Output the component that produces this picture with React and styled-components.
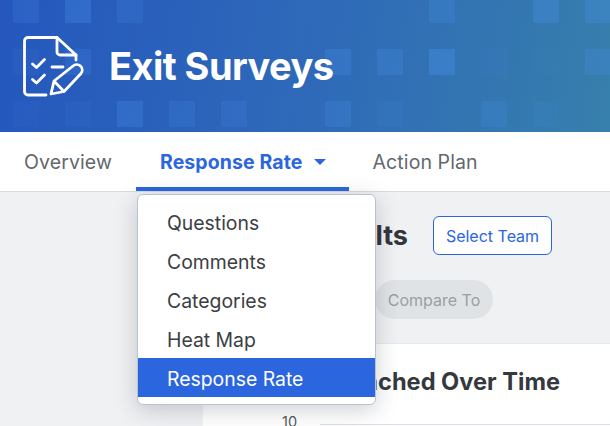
import styled, { createGlobalStyle } from "styled-components";

const GlobalStyle = createGlobalStyle`
  html, body {
    margin: 0;
    height: 100%;
    overflow: hidden;
    background: #f0f1f3;
    font-family: "Inter", "Liberation Sans", sans-serif;
  }
`;

const Page = styled.div`
  position: relative;
  width: 610px;
  height: 426px;
  overflow: hidden;
  color: #33363b;
`;

const Banner = styled.header`
  position: relative;
  display: flex;
  align-items: center;
  gap: 27px;
  height: 132px;
  padding-left: 22px;
  box-sizing: border-box;
  overflow: hidden;
  background: linear-gradient(100deg, #2557bd 0%, #2e69b9 50%, #377fac 100%);
`;

const SquareGrid = styled.div`
  position: absolute;
  left: 13px;
  top: -3px;
  display: grid;
  grid-template-columns: repeat(12, 26px);
  grid-auto-rows: 26px;
  gap: 26px;
`;

const Square = styled.span`
  background: rgba(72, 145, 235, ${(p) => p.$alpha});
`;

const BannerTitle = styled.h1`
  position: relative;
  margin: 0;
  font-size: 38px;
  font-weight: 700;
  letter-spacing: -0.55px;
  color: #fff;
`;

const LogoIcon = styled.svg`
  position: relative;
  width: 62px;
  height: 62px;
  margin-right: -2px;
  flex: none;
`;

const TabBar = styled.nav`
  display: flex;
  height: 60px;
  box-sizing: border-box;
  padding-left: 24px;
  background: #fff;
  border-bottom: 1px solid #d8dbe0;
`;

const Tab = styled.div`
  display: flex;
  align-items: center;
  gap: 11px;
  height: 59px;
  box-sizing: border-box;
  padding: ${(p) => (p.$active ? "4px 23px 0 24px" : "4px 0 0")};
  margin-right: 24px;
  font-size: 19.5px;
  letter-spacing: 0.1px;
  font-weight: ${(p) => (p.$active ? 700 : 400)};
  color: ${(p) => (p.$active ? "#2b66de" : "#62676e")};
  border-bottom: 4px solid ${(p) => (p.$active ? "#2b66de" : "transparent")};
`;

const Caret = styled.span`
  width: 0;
  height: 0;
  border-left: 6.5px solid transparent;
  border-right: 6.5px solid transparent;
  border-top: 6.5px solid #2b66de;
`;

const Main = styled.main`
  padding: 24px 0 0 203px;
`;

const TitleRow = styled.div`
  display: flex;
  align-items: center;
  gap: 25px;
  height: 39px;
`;

const PageTitle = styled.h2`
  width: 205px;
  margin: 0;
  font-size: 27px;
  font-weight: 700;
  text-align: right;
  white-space: nowrap;
`;

const SelectButton = styled.button`
  width: 119px;
  height: 39px;
  padding: 0;
  background: #fff;
  border: 1px solid #2b66de;
  border-radius: 6px;
  color: #2b66de;
  font: 400 16px "Inter", sans-serif;
`;

const FilterRow = styled.div`
  display: flex;
  justify-content: flex-end;
  width: 290px;
  margin-top: 25px;
`;

const Pill = styled.div`
  display: flex;
  align-items: center;
  justify-content: center;
  width: 118px;
  height: 39px;
  border-radius: 20px;
  background: #e0e3e6;
  color: #9a9ea3;
  font-size: 16px;
`;

const Card = styled.section`
  margin-top: 24px;
  height: 100px;
  background: #fff;
  border-top: 1px solid #e6e8eb;
`;

const CardTitle = styled.h3`
  width: 357px;
  margin: 0;
  padding-top: 24px;
  font-size: 23.6px;
  line-height: 27px;
  font-weight: 700;
  text-align: right;
  white-space: nowrap;
  color: #35383d;
`;

const AxisRow = styled.div`
  display: flex;
  align-items: center;
  gap: 23px;
  margin: 18px 0 0 79px;
  font-size: 14.5px;
  line-height: 18px;
  color: #55595f;
`;

const GridLine = styled.span`
  flex: 1;
  height: 1px;
  margin-top: 4px;
  background: #dcdee2;
`;

const Menu = styled.ul`
  position: absolute;
  left: 137px;
  top: 194px;
  width: 239px;
  height: 211px;
  box-sizing: border-box;
  margin: 0;
  padding: 7px 0 0;
  list-style: none;
  background: #fff;
  border: 1px solid #b9c3d2;
  border-radius: 6px;
  box-shadow: 0 5px 22px rgba(30, 40, 60, 0.22);
`;

const MenuItem = styled.li`
  display: flex;
  align-items: center;
  height: 39px;
  box-sizing: border-box;
  padding: 2px 0 0 29px;
  font-size: 19.4px;
  color: ${(p) => (p.$active ? "#fff" : "#3b3e43")};
  background: ${(p) => (p.$active ? "#2b66de" : "transparent")};
`;

const squares = [
  [0.18, 0.3, 0.18, 0, 0, 0, 0, 0, 0.24, 0, 0.3, 0.3],
  [0.1, 0.2, 0, 0, 0, 0, 0.25, 0.25, 0.38, 0.07, 0.03, 0.25],
  [0.07, 0.07, 0.28, 0.18, 0.18, 0, 0.22, 0.1, 0, 0.2, 0.1, 0],
];

const menuItems = ["Questions", "Comments", "Categories", "Heat Map", "Response Rate"];

export default function App() {
  return (
    <Page>
      <GlobalStyle />
      <Banner>
        <SquareGrid>
          {squares.flat().map((alpha, i) => (
            <Square key={i} $alpha={alpha} />
          ))}
        </SquareGrid>
        <LogoIcon viewBox="22 30 62 62" fill="none" stroke="#fff" strokeWidth="2.8" strokeLinecap="round" strokeLinejoin="round">
          <path d="M46 90H28a3.5 3.5 0 0 1-3.5-3.5V36a3.5 3.5 0 0 1 3.5-3.5h29L76 50v5" />
          <path d="M57 32.5V47a3 3 0 0 0 3 3h16" />
          <path d="M32.5 59l4 3.5 8-8M32.5 74.5l4 3.5 8-8M52 62h11" />
          <path d="M51 89l3-13L73 61a5.5 5.5 0 0 1 8 7.5L64 86.5zM54 76L64 86.5" />
        </LogoIcon>
        <BannerTitle>Exit Surveys</BannerTitle>
      </Banner>
      <TabBar>
        <Tab>Overview</Tab>
        <Tab $active>
          Response Rate <Caret />
        </Tab>
        <Tab>Action Plan</Tab>
      </TabBar>
      <Main>
        <TitleRow>
          <PageTitle>Results</PageTitle>
          <SelectButton>Select Team</SelectButton>
        </TitleRow>
        <FilterRow>
          <Pill>Compare To</Pill>
        </FilterRow>
        <Card>
          <CardTitle>Launched Over Time</CardTitle>
          <AxisRow>
            10
            <GridLine />
          </AxisRow>
        </Card>
      </Main>
      <Menu>
        {menuItems.map((item) => (
          <MenuItem key={item} $active={item === "Response Rate"}>
            {item}
          </MenuItem>
        ))}
      </Menu>
    </Page>
  );
}
